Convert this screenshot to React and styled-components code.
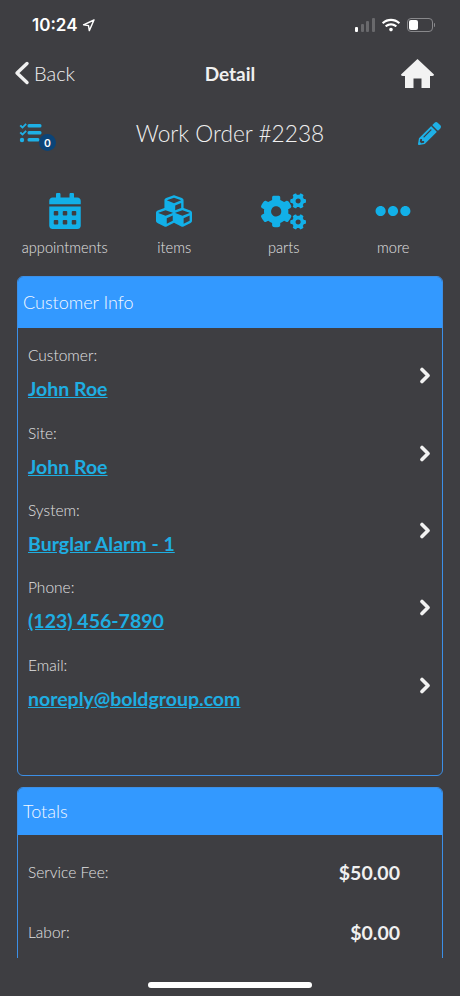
import React from "react";
import styled, { createGlobalStyle } from "styled-components";
import { FaCalendarAlt, FaCubes, FaCogs, FaEllipsisH, FaPencilAlt, FaWifi } from "react-icons/fa";

const customerRows = [
  { label: "Customer:", value: "John Roe" },
  { label: "Site:", value: "John Roe" },
  { label: "System:", value: "Burglar Alarm - 1" },
  { label: "Phone:", value: "(123) 456-7890" },
  { label: "Email:", value: "noreply@boldgroup.com" },
];

const actions = [
  { label: "appointments", icon: <FaCalendarAlt size={36} /> },
  { label: "items", icon: <FaCubes size={36} /> },
  { label: "parts", icon: <FaCogs size={45} /> },
  { label: "more", icon: <FaEllipsisH size={36} /> },
];

const App = () => (
  <Screen>
    <GlobalStyle />
    <StatusBar>
      <Time>
        10:24
        <svg width="13" height="13" viewBox="0 0 13 13" fill="none">
          <path d="M12 1 1.5 5.8l5 .8.8 5z" stroke="#fff" strokeWidth="1.4" strokeLinejoin="round" />
        </svg>
      </Time>
      <StatusIcons>
        <Signal>
          <Bar $h={5} $on />
          <Bar $h={8} />
          <Bar $h={11} />
          <Bar $h={14} />
        </Signal>
        <FaWifi size={18} />
        <Battery>
          <BatteryShell>
            <BatteryLevel />
          </BatteryShell>
          <BatteryNub />
        </Battery>
      </StatusIcons>
    </StatusBar>
    <NavBar>
      <BackLink>
        <svg width="16" height="24" viewBox="0 0 16 24" fill="none">
          <path d="M13 2.5 3 12l10 9.5" stroke="#f0f0f0" strokeWidth="3.4" strokeLinecap="round" strokeLinejoin="round" />
        </svg>
        Back
      </BackLink>
      <NavTitle>Detail</NavTitle>
      <HomeButton>
        <svg width="33" height="29" viewBox="0 0 33 29" fill="#f2f2f2">
          <path d="M16.5 0 33 15.5Q33 17 31 17H29V29H20.5V19.5H12.5V29H4V17H2Q0 17 0 15.5Z" />
        </svg>
      </HomeButton>
    </NavBar>
    <TitleRow>
      <TaskButton>
        <svg width="24" height="20" viewBox="0 0 24 20" fill="#1eb0e6">
          <path d="M.5 3 2 1.7l1.5 1.5L6.5.3 7.8 1.6 3.5 5.8zM.5 10 2 8.7l1.5 1.5 3-2.9 1.3 1.3-4.3 4.2z" />
          <circle cx="3" cy="17" r="2.2" />
          <rect x="8.5" y="1" width="14" height="3.4" rx="1.5" />
          <rect x="8.5" y="8" width="14" height="3.4" rx="1.5" />
          <rect x="8.5" y="15" width="12" height="3.4" rx="1.5" />
        </svg>
        <Badge>0</Badge>
      </TaskButton>
      <OrderTitle>Work Order #2238</OrderTitle>
      <EditButton>
        <FaPencilAlt size={23} />
      </EditButton>
    </TitleRow>
    <ActionRow>
      {actions.map((a) => (
        <Action key={a.label}>
          <ActionIcon>{a.icon}</ActionIcon>
          <span>{a.label}</span>
        </Action>
      ))}
    </ActionRow>
    <Scroller>
      <Card>
        <CardHeader $h={51}>Customer Info</CardHeader>
        <CustomerList>
          {customerRows.map((r) => (
            <CustomerRow key={r.label}>
              <RowText>
                <RowLabel>{r.label}</RowLabel>
                <RowLink>{r.value}</RowLink>
              </RowText>
              <svg width="13" height="17" viewBox="0 0 13 17" fill="none">
                <path d="M3 2.5 9 8.5l-6 6" stroke="#f2f2f2" strokeWidth="3.6" strokeLinecap="round" strokeLinejoin="round" />
              </svg>
            </CustomerRow>
          ))}
        </CustomerList>
      </Card>
      <Card>
        <CardHeader $h={47}>Totals</CardHeader>
        <TotalsList>
          <TotalRow>
            <TotalLabel>Service Fee:</TotalLabel>
            <TotalValue>$50.00</TotalValue>
          </TotalRow>
          <TotalRow>
            <TotalLabel>Labor:</TotalLabel>
            <TotalValue>$0.00</TotalValue>
          </TotalRow>
        </TotalsList>
      </Card>
    </Scroller>
    <HomeBarWrap>
      <HomeBar />
    </HomeBarWrap>
  </Screen>
);
export default App;

const GlobalStyle = createGlobalStyle`
  html, body {
    margin: 0;
    padding: 0;
    background: #3e3e42;
  }
  * {
    box-sizing: border-box;
  }
`;
const Screen = styled.div`
  width: 460px;
  height: 996px;
  overflow: hidden;
  display: flex;
  flex-direction: column;
  background: #3e3e42;
  color: #f0f0f0;
  font-family: "Lato", "Open Sans", sans-serif;
`;
const StatusBar = styled.div`
  height: 50px;
  flex: none;
  display: flex;
  justify-content: space-between;
  align-items: center;
  padding: 0 25px 0 32px;
  color: #fff;
`;
const Time = styled.div`
  font-family: "Inter", sans-serif;
  font-size: 17px;
  font-weight: 600;
  display: flex;
  align-items: center;
  gap: 5px;
`;
const StatusIcons = styled.div`
  display: flex;
  align-items: center;
  gap: 7px;
`;
const Signal = styled.div`
  display: flex;
  align-items: flex-end;
  gap: 2.5px;
  height: 14px;
`;
const Bar = styled.span`
  width: 3px;
  height: ${(p) => p.$h}px;
  border-radius: 1px;
  background: ${(p) => (p.$on ? "#fff" : "#69696c")};
`;
const Battery = styled.div`
  display: flex;
  align-items: center;
  gap: 1px;
`;
const BatteryShell = styled.div`
  width: 26px;
  height: 14px;
  border: 1px solid #88888b;
  border-radius: 4px;
  padding: 1px;
`;
const BatteryLevel = styled.div`
  width: 9px;
  height: 100%;
  background: #fff;
  border-radius: 2px;
`;
const BatteryNub = styled.div`
  width: 1.5px;
  height: 4px;
  background: #88888b;
  border-radius: 0 1px 1px 0;
`;
const NavBar = styled.div`
  height: 48px;
  flex: none;
  display: grid;
  grid-template-columns: 1fr auto 1fr;
  align-items: center;
  padding: 0 14px 2px;
`;
const BackLink = styled.div`
  display: flex;
  align-items: center;
  gap: 4px;
  font-size: 20px;
  font-weight: 300;
`;
const NavTitle = styled.div`
  font-size: 19px;
  font-weight: 700;
`;
const HomeButton = styled.div`
  justify-self: end;
  display: flex;
  margin-right: 12px;
`;
const TitleRow = styled.div`
  height: 50px;
  margin-top: 12px;
  flex: none;
  display: grid;
  grid-template-columns: 1fr auto 1fr;
  align-items: center;
  padding: 0 19px 4px;
`;
const TaskButton = styled.div`
  position: relative;
  display: flex;
  color: #1eb0e6;
`;
const Badge = styled.span`
  position: absolute;
  left: 20px;
  top: 11px;
  width: 17px;
  height: 17px;
  border-radius: 50%;
  background: #0b4478;
  color: #fff;
  font-size: 11px;
  font-weight: 700;
  display: flex;
  align-items: center;
  justify-content: center;
`;
const OrderTitle = styled.div`
  font-size: 22.7px;
  font-weight: 300;
`;
const EditButton = styled.div`
  justify-self: end;
  display: flex;
  color: #1eb0e6;
`;
const ActionRow = styled.div`
  height: 116px;
  flex: none;
  display: grid;
  grid-template-columns: repeat(4, 109.5px);
  padding: 30px 0 0 10px;
`;
const Action = styled.div`
  display: flex;
  flex-direction: column;
  align-items: center;
  font-size: 14.6px;
  font-weight: 300;
  color: #e2e2e2;
`;
const ActionIcon = styled.div`
  height: 42px;
  display: flex;
  align-items: center;
  justify-content: center;
  color: #12b0e8;
  margin-bottom: 7px;
`;
const Scroller = styled.div`
  height: 682px;
  flex: none;
  overflow: hidden;
  padding: 0 17px;
  display: flex;
  flex-direction: column;
  gap: 11px;
`;
const Card = styled.div`
  flex: none;
  border: 1px solid #3c8fe6;
  border-radius: 6px;
  overflow: hidden;
`;
const CardHeader = styled.div`
  height: ${(p) => p.$h}px;
  display: flex;
  align-items: center;
  padding: 0 0 2px 5px;
  background: #3399ff;
  font-size: 18px;
  font-weight: 300;
  color: #f4f8ff;
`;
const CustomerList = styled.div`
  height: 447px;
  padding: 9px 10px 0;
`;
const CustomerRow = styled.div`
  height: 77.4px;
  display: flex;
  justify-content: space-between;
  align-items: center;
`;
const RowText = styled.div`
  padding-bottom: 5px;
`;
const RowLabel = styled.div`
  font-size: 15.5px;
  font-weight: 300;
  color: #e2e2e2;
  margin-bottom: 13px;
`;
const RowLink = styled.div`
  font-size: 19.5px;
  font-weight: 700;
  color: #1eaee2;
  text-decoration: underline;
`;
const TotalsList = styled.div`
  height: 300px;
  padding: 24px 42px 0 10px;
  display: flex;
  flex-direction: column;
  gap: 35px;
`;
const TotalRow = styled.div`
  display: flex;
  justify-content: space-between;
  align-items: center;
  height: 25px;
`;
const TotalLabel = styled.div`
  font-size: 15.5px;
  font-weight: 300;
  color: #e2e2e2;
`;
const TotalValue = styled.div`
  font-size: 19.5px;
  font-weight: 700;
  color: #f0f0f0;
  padding-top: 2px;
`;
const HomeBarWrap = styled.div`
  flex: 1;
  display: flex;
  justify-content: center;
  padding-top: 24px;
`;
const HomeBar = styled.div`
  width: 164px;
  height: 6px;
  border-radius: 3px;
  background: #fff;
`;
